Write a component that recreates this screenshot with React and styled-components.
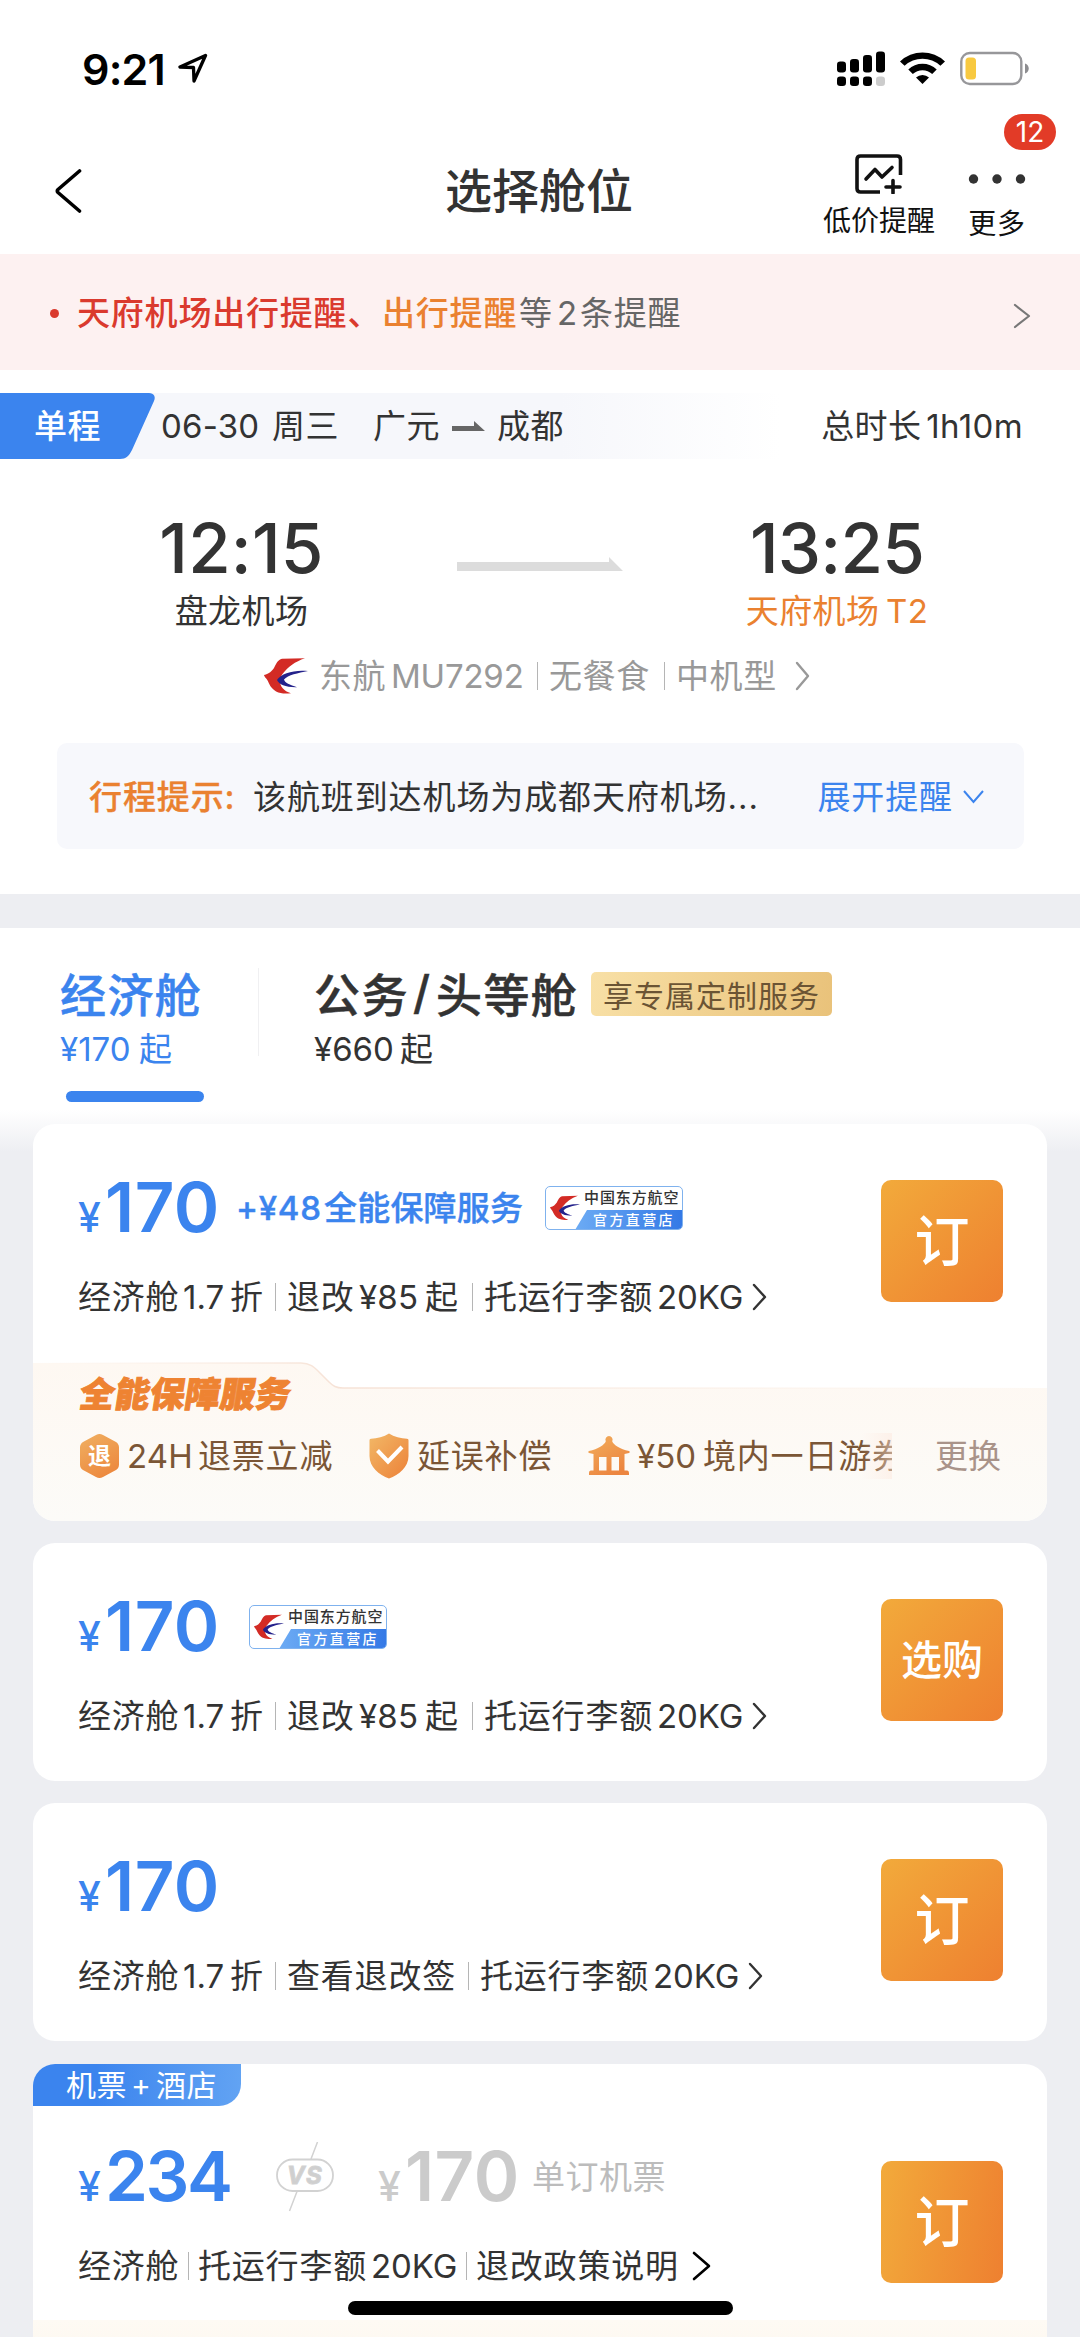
import React from "react";
import styled, { createGlobalStyle } from "styled-components";

const BLUE = "#3b84ee";
const ORANGE = "#ea8130";
const INK = "#333333";

const Global = createGlobalStyle`
  * { box-sizing: border-box; }
  body {
    margin: 0;
    background: #edeef2;
    font-family: Inter, "Noto Sans CJK SC", sans-serif;
    color: ${INK};
  }
  svg { display: block; flex: none; }
`;

const Page = styled.div`
  position: relative;
  width: 1080px;
  height: 2337px;
  overflow: hidden;
  background: #edeef2;
`;

/* ---------- status bar and header ---------- */

const StatusBar = styled.div`
  height: 100px;
  padding: 36px 50px 0 82px;
  display: flex;
  align-items: flex-start;
  background: #fff;
`;

const Clock = styled.div`
  width: 96px;
  font-size: 43px;
  line-height: 66px;
  height: 66px;
  font-weight: 600;
  letter-spacing: -0.8px;
  color: #000;
`;

const StatusIcons = styled.div`
  margin-left: auto;
  display: flex;
  gap: 15px;
  padding-top: 15px;
`;

const LocationIcon = styled.svg`
  margin-top: 17px;
`;

const Header = styled.header`
  height: 154px;
  padding: 26px 54px 0 52px;
  display: grid;
  grid-template-columns: 1fr auto 1fr;
  align-items: center;
  background: #fff;
`;

const BackIcon = styled.svg`
  margin: 2px 0 0 3px;
`;

const Title = styled.h1`
  margin: 0;
  font-size: 47px;
  line-height: 60px;
  font-weight: 500;
  padding-top: 1px;
`;

const Actions = styled.div`
  display: flex;
  justify-content: flex-end;
  align-self: start;
  gap: 33px;
  margin-top: 28px;
`;

const Action = styled.div`
  position: relative;
  display: flex;
  flex-direction: column;
  align-items: center;
  gap: 13px;
  font-size: 28px;
  line-height: 28px;
  letter-spacing: ${(p) => p.$track || 0}px;
  color: #111;
  white-space: nowrap;
`;

const CountBadge = styled.span`
  position: absolute;
  top: -40px;
  right: -30px;
  width: 52px;
  height: 36px;
  border-radius: 18px;
  background: #e23b27;
  color: #fff;
  font-size: 28px;
  line-height: 36px;
  letter-spacing: 0;
  text-align: center;
`;

/* ---------- alert strip ---------- */

const Alert = styled.div`
  height: 116px;
  padding: 2px 49px 0 50px;
  display: flex;
  align-items: center;
  background: #fdf1f1;
  font-size: 33px;
  line-height: 40px;
  letter-spacing: 0.8px;
  color: #666;
`;

const Bullet = styled.i`
  width: 9px;
  height: 9px;
  margin-right: 18px;
  border-radius: 50%;
  background: #da3a2e;
`;

const Strong = styled.span`
  font-weight: 500;
  width: ${(p) => p.$w}px;
  white-space: nowrap;
  color: ${(p) => p.$color};
  -webkit-text-stroke: ${(p) => p.$stroke || 0}px currentColor;
`;

const Seg = styled.span`
  flex: none;
  width: ${(p) => (p.$w ? p.$w + "px" : "auto")};
  letter-spacing: ${(p) => (p.$track === undefined ? "inherit" : p.$track + "px")};
  white-space: nowrap;
`;

const Push = styled.div`
  margin-left: auto;
  padding-top: ${(p) => p.$top || 0}px;
`;

/* ---------- flight summary ---------- */

const Flight = styled.section`
  height: 524px;
  padding-top: 23px;
  background: #fff;
`;

const TripBar = styled.div`
  height: 66px;
  display: flex;
  align-items: center;
  padding-right: 57px;
  background: linear-gradient(90deg, #f6f7fb 0, #f6f7fb 560px, #fff 780px);
  font-size: 33px;
  letter-spacing: 0.4px;
  line-height: 66px;
`;

const TripTag = styled.div`
  width: 161px;
  padding-left: 34px;
  height: 66px;
  color: #fff;
  font-weight: 500;
  background: ${BLUE};
  clip-path: path("M0 0H149C154 0 156 4 154 8L132 57C129 63 126 66 120 66H0Z");
`;

const Times = styled.div`
  display: flex;
  justify-content: space-between;
  height: 173px;
  padding: 54px 139px 0 148px;
`;

const Stop = styled.div`
  width: ${(p) => p.$w}px;
  display: flex;
  flex-direction: column;
  align-items: center;
  font-size: 33px;
  line-height: 40px;
  color: ${(p) => (p.$alt ? ORANGE : INK)};
  white-space: nowrap;
`;

const Clock2 = styled.strong`
  font-size: 69px;
  line-height: 70px;
  font-weight: 500;
  letter-spacing: ${(p) => p.$track}px;
  margin-bottom: 8px;
  color: ${INK};
`;

const Place = styled.span`
  letter-spacing: 0.4px;
  word-spacing: -3px;
`;

const RouteArrow = styled.svg`
  margin: 44px 0 0 12px;
`;

const Airline = styled.div`
  display: flex;
  align-items: center;
  height: 88px;
  padding-left: 264px;
  font-size: 33px;
  line-height: 40px;
  letter-spacing: 0.6px;
  color: #999;
`;

const Tip = styled.div`
  display: flex;
  align-items: center;
  height: 106px;
  margin: 23px 56px 0 57px;
  padding: 2px 40px 0 32px;
  border-radius: 10px;
  background: #f7f8fc;
  font-size: 33px;
  line-height: 40px;
  letter-spacing: 0.9px;
`;

const TipLink = styled.span`
  display: flex;
  align-items: center;
  gap: 10px;
  margin-left: auto;
  color: ${BLUE};
`;

/* ---------- cabin tabs ---------- */

const Tabs = styled.nav`
  display: flex;
  height: 182px;
  margin-top: 34px;
  padding: 34px 0 0 60px;
  background: #fff;
`;

const Tab = styled.div`
  width: ${(p) => p.$w}px;
  color: ${(p) => (p.$active ? BLUE : INK)};
`;

const TabName = styled.div`
  display: flex;
  align-items: center;
  height: 60px;
  font-size: 46px;
  font-weight: 500;
  letter-spacing: 1.4px;
  white-space: nowrap;
  -webkit-text-stroke: 0.5px currentColor;
`;

const TabPrice = styled.div`
  display: flex;
  height: 46px;
  margin-top: 4px;
  font-size: 33px;
  line-height: 46px;
`;

const Underline = styled.div`
  width: 138px;
  height: 11px;
  margin: 19px 0 0 6px;
  border-radius: 6px;
  background: ${BLUE};
`;

const TabDivider = styled.i`
  width: 1px;
  height: 88px;
  margin: 6px 55px 0 0;
  background: #f0f0f2;
`;

const Perk = styled.span`
  display: flex;
  align-items: center;
  justify-content: center;
  width: 241px;
  height: 44px;
  margin-top: 4px;
  border-radius: 5px;
  background: linear-gradient(100deg, #f8e0a6, #e9c27a);
  color: #6b5434;
  font-size: 30px;
  font-weight: 400;
  letter-spacing: 1px;
  -webkit-text-stroke: 0;
`;

/* ---------- fare cards ---------- */

const List = styled.main`
  display: flex;
  flex-direction: column;
  gap: 22px;
  padding: 14px 33px 0;
  background: linear-gradient(#fff 0, #edeef2 42px);
`;

const Card = styled.article`
  flex: none;
  height: ${(p) => p.$h}px;
  margin-top: ${(p) => p.$top || 0}px;
  border-radius: 22px;
  background: #fff;
  overflow: hidden;
`;

const Fare = styled.div`
  display: flex;
  justify-content: space-between;
  height: 238px;
  padding: ${(p) => (p.$combo ? 43 : 56)}px 44px 0 45px;
`;

const PriceRow = styled.div`
  display: flex;
  align-items: center;
  height: 56px;
`;

const Price = styled.div`
  display: flex;
  align-items: baseline;
  width: ${(p) => p.$w}px;
  color: ${(p) => (p.$muted ? "#cbcbcb" : BLUE)};
  font-size: 69px;
  line-height: 56px;
  font-weight: 600;
  letter-spacing: ${(p) => p.$track}px;
`;

const Yen = styled.span`
  width: 27px;
  font-size: 41px;
  font-weight: 500;
  line-height: 1;
`;

const Extra = styled.span`
  display: flex;
  width: 309px;
  font-size: 33px;
  line-height: 40px;
  font-weight: 500;
  color: ${BLUE};
  -webkit-text-stroke: 0.4px currentColor;
`;

const Muted = styled.span`
  font-size: 33px;
  line-height: 40px;
  letter-spacing: 0.5px;
  color: #bcbcbc;
`;

const Info = styled.div`
  display: flex;
  align-items: center;
  margin-top: 40px;
  height: 42px;
  font-size: 33px;
  line-height: 42px;
  letter-spacing: 0.8px;
`;

const Rule = styled.i`
  flex: none;
  width: ${(p) => p.$w || 12}px;
  height: 28px;
  border-left: 1px solid #b5b5b5;
`;

const Book = styled.button`
  width: 122px;
  height: 122px;
  margin-top: ${(p) => p.$top || 0}px;
  padding: 0;
  border: 0;
  border-radius: 10px;
  background: linear-gradient(${(p) => p.$angle || 135}deg, #f2aa3b, #ee8030);
  color: #fff;
  font-family: inherit;
  font-weight: 500;
  font-size: ${(p) => (p.$small ? 41 : 55)}px;
  line-height: 122px;
`;

const StoreBadge = styled.div`
  display: grid;
  grid-template-columns: 31px 1fr;
  width: 138px;
  height: 44px;
  border: 1.5px solid #7fb2ee;
  border-radius: 5px;
  background: #fff;
  overflow: hidden;
  white-space: nowrap;
`;

const StoreLogo = styled.div`
  padding: 8px 0 0 4px;
`;

const StoreText = styled.div`
  display: flex;
  flex-direction: column;
`;

const StoreName = styled.span`
  height: 23px;
  padding-left: 7px;
  font-size: 15px;
  line-height: 22px;
  letter-spacing: 0.9px;
  font-weight: 500;
  color: #333;
`;

const StoreKind = styled.span`
  height: 20px;
  padding-left: 18px;
  margin-left: -2px;
  background: linear-gradient(90deg, #6cabf4, #3479e6);
  clip-path: polygon(12px 0, 100% 0, 100% 100%, 0 100%);
  font-size: 14px;
  line-height: 19px;
  letter-spacing: 2.4px;
  font-weight: 500;
  color: #fff;
`;

const Service = styled.div`
  position: relative;
  height: 159px;
`;

const ServiceShape = styled.svg`
  position: absolute;
  inset: 0;
`;

const ServiceBody = styled.div`
  position: relative;
  padding: 13px 0 0 47px;
`;

const ServiceName = styled.div`
  width: max-content;
  height: 38px;
  font-size: 35px;
  line-height: 38px;
  font-weight: 900;
  letter-spacing: 0.2px;
  color: #ee8332;
  -webkit-text-stroke: 1px #ee8332;
  transform: skewX(-9deg);
`;

const Perks = styled.div`
  display: flex;
  align-items: center;
  margin-top: 20px;
  height: 46px;
  font-size: 33px;
  line-height: 46px;
  letter-spacing: 0.8px;
  color: #7b5636;
`;

const PerkClip = styled.div`
  position: relative;
  display: flex;
  align-items: center;
  width: 812px;
  height: 46px;
  overflow: hidden;
`;

const Fade = styled.i`
  position: absolute;
  right: 0;
  top: 0;
  width: 30px;
  height: 46px;
  background: linear-gradient(90deg, rgba(253, 235, 225, 0), rgba(253, 232, 222, 0.5));
`;

const Swap = styled.span`
  margin-left: 43px;
  letter-spacing: 0;
  color: #a99389;
`;

const HexWrap = styled.div`
  width: 39px;
  height: 45px;
  flex: none;
  margin-right: 8px;
  background: linear-gradient(150deg, #f0b062, #ec8238);
  clip-path: path("M16 1.5Q19.500 -0.500 23 1.5L36 8.500Q39 10.500 39 14V31Q39 34.500 36 36.500L23 43.500Q19.500 45.500 16 43.500L3 36.500Q0 34.500 0 31V14Q0 10.500 3 8.500Z");
  color: #fff;
  font-size: 23px;
  line-height: 45px;
  letter-spacing: 0;
  font-weight: 700;
  text-align: center;
`;

const ComboTag = styled.div`
  width: 208px;
  height: 42px;
  padding-left: 33px;
  border-radius: 0 0 22px 0;
  background: linear-gradient(90deg, ${BLUE} 30%, #62a3f3);
  color: #fff;
  font-size: 30px;
  line-height: 42px;
  display: flex;
  letter-spacing: 0.4px;
`;

const VsMark = styled.div`
  width: 102px;
  height: 70px;
`;

const NextOffer = styled.div`
  height: 30px;
  margin-top: -24px;
  background: linear-gradient(#fefaf4, #fdf8f0);
`;

const HomeBar = styled.div`
  position: absolute;
  left: 348px;
  top: 2301px;
  width: 385px;
  height: 14px;
  border-radius: 7px;
  background: #000;
`;

/* ---------- drawings ---------- */

const Swallow = ({ width = 44, height = 36 }) => (
  <svg width={width} height={height} viewBox="0 0 44 36">
    <path
      fill="#d32b25"
      d="M18 .8 41 .2C31 3.500 24 9 18.500 16 13.500 23 16 32 27 35.200 18 36.500 9.500 35 5 25.500 3.500 21 .2 19 0 17 5.500 15.500 7.500 13.500 10 10 12 6 14 1.500 18 .8Z"
    />
    <path fill="#24228b" d="M44 13C31 11.500 17 15 13 22 15 26.500 22 29.500 33 29.200 26 27 20.500 24.500 20 21.500 24 17 34 15 44 13Z" />
  </svg>
);

const ChevronIcon = styled.svg`
  margin-left: -2px;
`;

const Chevron = ({ w, h, color, sw = 2.4 }) => (
  <ChevronIcon width={w + 4} height={h + 4} viewBox={`-2 -2 ${w + 4} ${h + 4}`}>
    <path d={`M0 0 ${w} ${h / 2} 0 ${h}`} fill="none" stroke={color} strokeWidth={sw} strokeLinecap="round" strokeLinejoin="round" />
  </ChevronIcon>
);

const Signal = () => (
  <svg width="48" height="36" viewBox="0 0 48 36">
    <g fill="#000">
      <rect x="0" y="10.500" width="9" height="11" rx="3.200" />
      <rect x="13" y="8" width="9" height="13.500" rx="3.200" />
      <rect x="26" y="4" width="9" height="17.500" rx="3.200" />
      <rect x="39" y="0.500" width="9" height="21" rx="3.200" />
      <rect x="0" y="25.500" width="9" height="9.500" rx="3.200" />
      <rect x="13" y="25.500" width="9" height="9.500" rx="3.200" />
      <rect x="26" y="25.500" width="9" height="9.500" rx="3.200" />
    </g>
    <rect x="39" y="25.500" width="9" height="9.500" rx="3.200" fill="#ccc" />
  </svg>
);

const Wifi = () => (
  <svg width="45" height="34" viewBox="0 0 45 34">
    <path d="M0 10.500a32.500 32.500 0 0 1 45 0l-4.600 4.300a26.200 26.200 0 0 0-35.800 0z" />
    <path d="M8.300 18.500a20.500 20.500 0 0 1 28.400 0l-4.500 4.500a14.300 14.300 0 0 0-19.400 0z" />
    <path d="M16 26.500a9.500 9.500 0 0 1 13 0L22.500 33z" />
  </svg>
);

const Battery = () => (
  <svg width="70" height="35" viewBox="0 0 70 35">
    <rect x="1.300" y="2" width="60" height="31" rx="8.500" fill="none" stroke="#97979a" strokeWidth="2.400" />
    <rect x="5.500" y="6.500" width="10.500" height="22" rx="3.500" fill="#f8c940" />
    <path d="M65 12.500c5 1.500 5 8.500 0 10z" fill="#8d8d90" />
  </svg>
);

const PerkIcon = styled.svg`
  margin-right: ${(p) => p.$gap}px;
`;

const Shield = () => (
  <PerkIcon $gap={8} width="40" height="46" viewBox="0 0 40 46">
    <defs>
      <linearGradient id="shield" x1="0" y1="0" x2="1" y2="1">
        <stop offset="0" stopColor="#f2b867" />
        <stop offset="1" stopColor="#ec8138" />
      </linearGradient>
    </defs>
    <path d="M20 .5C25 4 32 5.500 38 5.800 39 5.900 39.500 6.500 39.500 7.500V23C39.500 34 30 42 20 45.500 10 42 .5 34 .5 23V7.500C.5 6.500 1 5.900 2 5.800 8 5.500 15 4 20 .5Z" fill="url(#shield)" />
    <path d="M8.500 17.500 19 28.500 33 14" fill="none" stroke="#fff" strokeWidth="4" />
  </PerkIcon>
);

const Pavilion = () => (
  <PerkIcon $gap={7} width="42" height="40" viewBox="0 0 42 40">
    <defs>
      <linearGradient id="pav" x1="0" y1="0" x2="0.600" y2="1">
        <stop offset="0" stopColor="#f2ae5c" />
        <stop offset="1" stopColor="#ec8540" />
      </linearGradient>
    </defs>
    <path
      fill="url(#pav)"
      d="M21 0a3.600 3.600 0 0 1 3.200 5.200C25.500 9 32 13 41 15c1 .4 1 1.600 0 2l-4.500 1v16.500h2.500c1.500 0 2 1 2 3v1.500H1v-1.500c0-2 .5-3 2-3h2.500V18L1 17c-1-.4-1-1.600 0-2 9-2 15.500-6 16.800-9.800A3.600 3.600 0 0 1 21 0ZM11 21v13.500h7.500V21Zm12.500 0v13.500H31V21Z"
      fillRule="evenodd"
    />
  </PerkIcon>
);

const Vs = () => (
  <svg width="58" height="70" viewBox="0 0 58 70" fill="none" stroke="#d2d2d2">
    <rect x="1" y="17.500" width="56" height="31.500" rx="15.500" strokeWidth="1.800" />
    <path d="M41.500 0 35 17M21 49.500 13.500 69" strokeWidth="1.500" />
    <text x="29" y="41.500" textAnchor="middle" fill="#cfcfcf" fontFamily="Inter" fontWeight="700" fontStyle="italic" fontSize="24" letterSpacing="1.500">
      VS
    </text>
  </svg>
);

/* ---------- pieces ---------- */

const Store = () => (
  <StoreBadge>
    <StoreLogo>
      <Swallow width={30} height={26} />
    </StoreLogo>
    <StoreText>
      <StoreName>中国东方航空</StoreName>
      <StoreKind>官方直营店</StoreKind>
    </StoreText>
  </StoreBadge>
);

/* Each entry is [text, width, tracking]; "|" is a rule, "||" a tight one. */
const Segs = ({ items }) =>
  items.map((it, i) => {
    if (it === "|") return <Rule key={i} />;
    if (it === "||") return <Rule key={i} $w={10} />;
    return (
      <Seg key={i} $w={it[1]} $track={it[2]}>
        {it[0]}
      </Seg>
    );
  });

const BAG = [["托运行李额", 173], ["20KG", 97, -0.1]];
const RULES = [["经济舱", 105], ["1.7", 47, 0], ["折", 45], "|", ["退改", 72], ["¥85", 66, 0.2], ["起", 47], "|", ...BAG];
const CHECK = [["经济舱", 105], ["1.7", 47, 0], ["折", 45], "|", ["查看退改签", 181], "|", ...BAG];
const COMBO = [["经济舱", 110], "||", ["托运行李额", 173], ["20KG", 95, -0.1], "||", ["退改政策说明", 218]];

const FareRow = ({ price, info, button, small, children }) => (
  <Fare>
    <div>
      <PriceRow>
        <Price $w={price} $track={0.5}>
          <Yen>¥</Yen>170
        </Price>
        {children}
      </PriceRow>
      <Info>
        <Segs items={info} />
        <Chevron w={11} h={24} color={INK} />
      </Info>
    </div>
    <Book $small={small}>{button}</Book>
  </Fare>
);

export default function App() {
  return (
    <Page>
      <Global />
      <StatusBar>
        <Clock>9:21</Clock>
        <LocationIcon width="30" height="30" viewBox="0 0 30 30" fill="none" stroke="#000" strokeWidth="3.300" strokeLinejoin="round">
          <path d="M27.500 2.500 2 14 15.500 14.500 16 28Z" />
        </LocationIcon>
        <StatusIcons>
          <Signal />
          <Wifi />
          <Battery />
        </StatusIcons>
      </StatusBar>

      <Header>
        <BackIcon width="27" height="44" viewBox="0 0 27 44" fill="none" stroke="#000" strokeWidth="3.600" strokeLinecap="round" strokeLinejoin="round">
          <path d="M24.500 2 3 20.500Q1.500 22 3 23.500L24.500 42" />
        </BackIcon>
        <Title>选择舱位</Title>
        <Actions>
          <Action>
            <svg width="48" height="40" viewBox="0 0 48 40" fill="none" stroke="#111" strokeWidth="3.600" strokeLinejoin="round">
              <path d="M25 38H5.500Q2 38 2 34.500V5.500Q2 2 5.500 2H42Q45.500 2 45.500 5.500V21" />
              <path d="M11 25 20 15.500 27 23 37 13.500" strokeLinecap="round" />
              <path d="M38 26.500V39M31 33H45" strokeLinecap="round" />
            </svg>
            低价提醒
          </Action>
          <Action $track={0.8}>
            <CountBadge>12</CountBadge>
            <svg width="58" height="43" viewBox="0 0 58 43" fill="#333">
              <circle cx="5.500" cy="25" r="4.700" />
              <circle cx="29" cy="25" r="4.700" />
              <circle cx="52.500" cy="25" r="4.700" />
            </svg>
            更多
          </Action>
        </Actions>
      </Header>

      <Alert>
        <Bullet />
        <Strong $w={305} $color="#da3a2e">天府机场出行提醒、</Strong>
        <Strong $w={137} $color={ORANGE}>出行提醒</Strong>
        <Segs items={[["等", 38], ["2", 23], ["条提醒", 0]]} />
        <Push $top={6}>
          <Chevron w={14} h={22} color="#777" sw={2.2} />
        </Push>
      </Alert>

      <Flight>
        <TripBar>
          <TripTag>单程</TripTag>
          <Segs items={[["06-30", 111, 0.2], ["周三", 101], ["广元", 79]]} />
          <svg width="45" height="12" viewBox="0 0 45 12">
            <path d="M0 6H22V1L33 11H0Z" fill="#666" />
          </svg>
          <Seg>成都</Seg>
          <Push />
          <Seg $w={105}>总时长</Seg>
          <Seg>1h10m</Seg>
        </TripBar>

        <Times>
          <Stop $w={187}>
            <Clock2 $track={0.2}>12:15</Clock2>
            <Place>盘龙机场</Place>
          </Stop>
          <RouteArrow width="166" height="14" viewBox="0 0 166 14">
            <path d="M0 5H152V0L166 14H0Z" fill="#dcdcdc" />
          </RouteArrow>
          <Stop $w={208} $alt>
            <Clock2 $track={-0.8}>13:25</Clock2>
            <Place>天府机场 T2</Place>
          </Stop>
        </Times>

        <Airline>
          <Swallow />
          <Segs items={[["", 11], ["东航", 72], ["MU7292", 146, -0.2], "|", ["无餐食", 115], "|", ["中机型", 121]]} />
          <Chevron w={11} h={26} color="#999" />
        </Airline>

        <Tip>
          <Strong $w={164} $color={ORANGE} $stroke={0.3}>行程提示:</Strong>
          <Seg>该航班到达机场为成都天府机场...</Seg>
          <TipLink>
            展开提醒
            <svg width="21" height="15" viewBox="0 0 21 15" fill="none" stroke={BLUE} strokeWidth="2">
              <path d="M1 1 10.500 12 20 1" />
            </svg>
          </TipLink>
        </Tip>
      </Flight>

      <Tabs>
        <Tab $active $w={198}>
          <TabName>经济舱</TabName>
          <TabPrice>
            <Segs items={[["¥170", 79], ["起", 0]]} />
          </TabPrice>
          <Underline />
        </Tab>
        <TabDivider />
        <Tab $w={600}>
          <TabName>
            <Segs items={[["公务", 99], ["/", 23], ["头等舱", 155]]} />
            <Perk>享专属定制服务</Perk>
          </TabName>
          <TabPrice>
            <Segs items={[["¥660", 86], ["起", 0]]} />
          </TabPrice>
        </Tab>
      </Tabs>

      <List>
        <Card $h={397}>
          <FareRow price={158} info={RULES} button="订">
            <Extra>
              <Segs items={[["+¥48", 88, 0.7], ["全能保障服务", 0, 0.2]]} />
            </Extra>
            <Store />
          </FareRow>
          <Service>
            <ServiceShape width="1014" height="159" viewBox="0 0 1014 159">
              <defs>
                <linearGradient id="cream" x1="0" y1="0" x2="0" y2="1">
                  <stop offset="0" stopColor="#fef8f2" />
                  <stop offset="1" stopColor="#fcfbf8" />
                </linearGradient>
                <linearGradient id="edge" x1="0" y1="0" x2="1" y2="0">
                  <stop offset="0" stopColor="#fbefe6" stopOpacity="0" />
                  <stop offset="0.300" stopColor="#f6e2d6" />
                  <stop offset="1" stopColor="#fbefe6" stopOpacity="0" />
                </linearGradient>
              </defs>
              <path d="M0 1H268C277 1 281 5 286 10L296 20C300 24 303 26 310 26H1014V159H0Z" fill="url(#cream)" />
              <path d="M0 1H268C277 1 281 5 286 10L296 20C300 24 303 26 310 26H1014" fill="none" stroke="url(#edge)" strokeWidth="1.500" />
            </ServiceShape>
            <ServiceBody>
              <ServiceName>全能保障服务</ServiceName>
              <Perks>
                <PerkClip>
                  <HexWrap>退</HexWrap>
                  <Segs items={[["24H", 71, 0.2], ["退票立减", 171]]} />
                  <Shield />
                  <Seg $w={171}>延误补偿</Seg>
                  <Pavilion />
                  <Segs items={[["¥50", 66, 0], ["境内一日游券", 0]]} />
                  <Fade />
                </PerkClip>
                <Swap>更换</Swap>
              </Perks>
            </ServiceBody>
          </Service>
        </Card>

        <Card $h={238}>
          <FareRow price={171} info={RULES} button="选购" small>
            <Store />
          </FareRow>
        </Card>

        <Card $h={238}>
          <FareRow price={171} info={CHECK} button="订" />
        </Card>

        <Card $h={300} $top={1}>
          <ComboTag>
            <Segs items={[["机票", 65], ["+", 25], ["酒店", 0]]} />
          </ComboTag>
          <Fare $combo>
            <div>
              <PriceRow>
                <Price $w={198} $track={-2.4}>
                  <Yen>¥</Yen>234
                </Price>
                <VsMark>
                  <Vs />
                </VsMark>
                <Price $muted $w={154} $track={0.4}>
                  <Yen>¥</Yen>170
                </Price>
                <Muted>单订机票</Muted>
              </PriceRow>
              <Info>
                <Segs items={COMBO} />
                <Chevron w={15} h={26} color="#000" sw={2.6} />
              </Info>
            </div>
            <Book $top={12} $angle={100}>订</Book>
          </Fare>
          <NextOffer />
        </Card>
      </List>
      <HomeBar />
    </Page>
  );
}
